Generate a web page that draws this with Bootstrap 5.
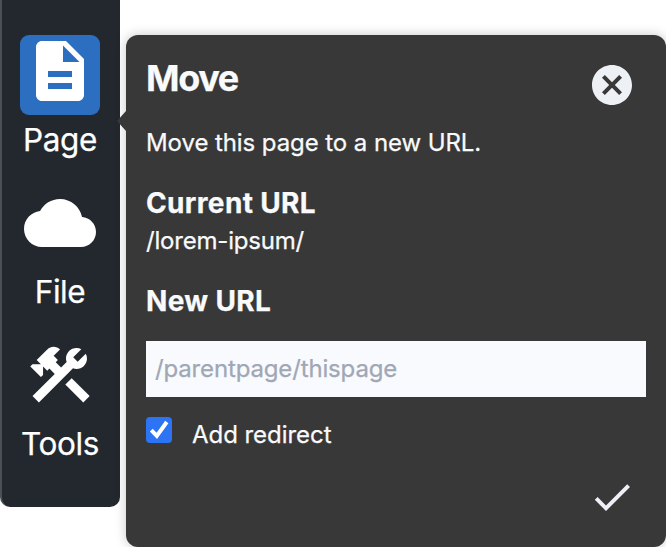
<!DOCTYPE html>
<html lang="en">
<head>
<meta charset="utf-8">
<meta name="viewport" content="width=device-width, initial-scale=1">
<title>Move page</title>
<link href="https://cdn.jsdelivr.net/npm/bootstrap@5.3.0/dist/css/bootstrap.min.css" rel="stylesheet">
<style>
  body { font-family: Inter, "Liberation Sans", sans-serif; background: #fff; width: 666px; height: 547px; -webkit-text-stroke: .25px; }
  .toolbar { width: 120px; height: 507px; padding: 35px 2px 0 0; background: #23282f; border-left: 2px solid #495057; border-radius: 0 0 10px 10px; }
  .tool { width: 116px; height: 152px; color: #fff; text-decoration: none; }
  .tool-icon { width: 80px; height: 80px; padding: 0 4px; border-radius: 9px; }
  .tool-icon svg { width: 72px; height: 72px; display: block; }
  .tool.active .tool-icon { background: #2c6fc0; }
  .tool-label { font-size: 31.5px; line-height: 38px; margin-top: 6px; white-space: nowrap; letter-spacing: -.4px; }
  .panel { width: 540px; height: 512px; margin: 35px 0 0 6px; padding: 20px; background: #383838; color: #f8fafc; border-radius: 12px; box-shadow: 0 0 12px rgba(0,0,0,.22); font-size: 24px; line-height: 36px; }
  .panel::before { content: ""; position: absolute; left: -9px; top: 76px; border: solid transparent; border-width: 10px 9px 10px 0; border-right-color: #383838; }
  .panel-head { height: 70px; }
  .panel h1 { font-size: 36px; line-height: 46px; font-weight: 700; letter-spacing: -1.4px; }
  .panel h2 { font-size: 28px; line-height: 36px; font-weight: 700; letter-spacing: .35px; }
  .icon-btn { width: 48px; height: 48px; color: #edf0f5; }
  .btn-close-panel { margin: 6px 10px 0 0; }
  .intro { letter-spacing: -.08px; }
  .current { margin: 2px 0 24px; letter-spacing: -.2px; }
  .new-title { margin-bottom: 22px; }
  .url-input { height: 56px; padding: 0 9px 2px; background: #f9fafd; font-size: 24px; letter-spacing: -.15px; }
  .url-input::placeholder { color: #a0a7b5; }
  .panel .check-box { width: 26px; height: 26px; border-radius: 4px; background-color: #2d74f5; }
  .redirect { gap: 20px; }
  .redirect-text { margin-top: 4px; letter-spacing: -.05px; }
  .btn-confirm { margin: 0 10px 6px 0; }
</style>
<script src="https://cdn.jsdelivr.net/npm/bootstrap@5.3.0/dist/js/bootstrap.bundle.min.js"></script>
</head>
<body class="d-flex align-items-start overflow-hidden">
  <nav class="toolbar flex-shrink-0 d-flex flex-column align-items-center">
    <a class="tool active d-flex flex-column align-items-center" href="#">
      <span class="tool-icon"><svg viewBox="0 0 24 24" fill="currentColor"><path d="M14 2H6c-1.1 0-2 .9-2 2v16c0 1.1.9 2 2 2h12c1.1 0 2-.9 2-2V8l-6-6zm2 16H8v-2h8v2zm0-4H8v-2h8v2zm-3-5V3.5L18.5 9H13z"/></svg></span>
      <span class="tool-label">Page</span>
    </a>
    <a class="tool d-flex flex-column align-items-center" href="#">
      <span class="tool-icon"><svg viewBox="0 0 24 24" fill="currentColor"><path d="M19.35 10.04C18.67 6.59 15.64 4 12 4 9.11 4 6.6 5.64 5.35 8.04 2.34 8.36 0 10.91 0 14c0 3.31 2.69 6 6 6h13c2.76 0 5-2.24 5-5 0-2.64-2.05-4.78-4.65-4.96z"/></svg></span>
      <span class="tool-label">File</span>
    </a>
    <a class="tool d-flex flex-column align-items-center" href="#">
      <span class="tool-icon"><svg viewBox="0 0 24 24" fill="currentColor"><path d="M13.78 15.17l2.12-2.12 5.98 5.99-2.12 2.12z"/><path d="M17.5 10c1.93 0 3.5-1.57 3.5-3.5 0-.58-.16-1.12-.41-1.6l-2.7 2.7-1.49-1.49 2.7-2.7C18.62 3.16 18.08 3 17.5 3 15.57 3 14 4.57 14 6.5c0 .41.08.8.21 1.16l-1.85 1.85-1.78-1.78.71-.71-1.41-1.41L12 3.49c-1.17-1.17-3.07-1.17-4.24 0L4.22 7.03l1.41 1.41H2.81l-.71.71 3.54 3.54.71-.71V9.15l1.41 1.41.71-.71 1.78 1.78-7.41 7.41 2.12 2.12L16.34 9.79c.36.13.75.21 1.16.21z"/></svg></span>
      <span class="tool-label">Tools</span>
    </a>
  </nav>
  <main class="panel position-relative flex-shrink-0 d-flex flex-column">
    <div class="panel-head d-flex justify-content-between align-items-start">
      <h1 class="mb-0">Move</h1>
      <button class="icon-btn btn-close-panel btn p-0 border-0" type="button" aria-label="Close"><svg class="d-block" width="48" height="48" viewBox="0 0 24 24" fill="currentColor"><path d="M12 2C6.47 2 2 6.47 2 12s4.47 10 10 10 10-4.47 10-10S17.53 2 12 2zm5 13.59L15.59 17 12 13.41 8.41 17 7 15.59 10.59 12 7 8.41 8.41 7 12 10.59 15.59 7 17 8.41 13.41 12 17 15.59z"/></svg></button>
    </div>
    <p class="mb-4 intro">Move this page to a new URL.</p>
    <h2 class="mb-0">Current URL</h2>
    <p class="current">/lorem-ipsum/</p>
    <h2 class="new-title">New URL</h2>
    <input class="url-input form-control border-0 rounded-0 flex-shrink-0" type="text" placeholder="/parentpage/thispage" aria-label="New URL">
    <label class="redirect d-flex align-items-start mt-3"><svg class="check-box mt-1 flex-shrink-0" viewBox="0 0 26 26" fill="none" stroke="#fff" stroke-width="4"><path d="M5.3 13.2l5.5 5.7L20.8 5"/></svg><span class="redirect-text">Add redirect</span></label>
    <button class="icon-btn btn-confirm btn p-0 border-0 align-self-end mt-auto" type="button" aria-label="Confirm"><svg class="d-block" width="48" height="48" viewBox="0 0 24 24" fill="currentColor"><path d="M9 16.2L4.8 12l-1.4 1.4L9 19 21 7l-1.4-1.4z"/></svg></button>
  </main>
</body>
</html>
